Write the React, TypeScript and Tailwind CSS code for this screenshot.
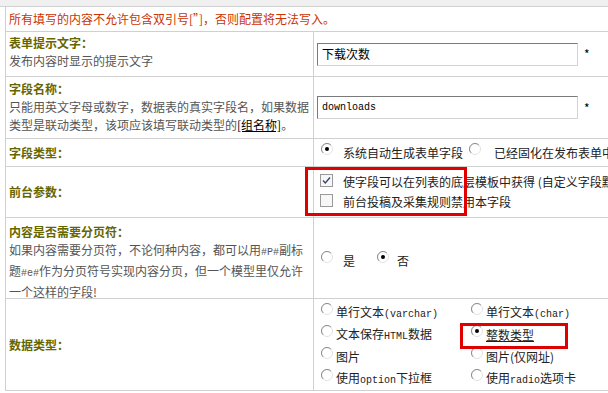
import React from 'react';

const M = ({ children }: { children: React.ReactNode }) => (
  <span className="font-['Liberation_Mono',monospace] text-[10px]">{children}</span>
);

function Radio({ checked = false }: { checked?: boolean }) {
  return (
    <svg width="12" height="12" viewBox="0 0 12 12" className="shrink-0 mb-[8px]">
      <circle cx="6" cy="6" r="5.5" fill="#fff" stroke="#e2e2e2" />
      <path d="M2.1 9.9 A5.5 5.5 0 0 1 9.9 2.1" fill="none" stroke="#8c8c8c" />
      {checked && <circle cx="6" cy="6" r="2" fill="#000" />}
    </svg>
  );
}

function Checkbox({ checked = false }: { checked?: boolean }) {
  return (
    <svg width="13" height="13" viewBox="0 0 13 13" className="shrink-0 mb-[3px]">
      <rect x="0.5" y="0.5" width="12" height="12" fill="#f7f7f7" stroke="#9a9a9a" />
      {checked && <path d="M3 6.5 L5.3 9 L10 3.5" fill="none" stroke="#3a4a6a" strokeWidth="1.4" />}
    </svg>
  );
}

const labelCls = 'font-bold text-[#666600]';
const descCls = 'text-[#555]';

function Row({ h, left, right, center = false }: { h: string; left: React.ReactNode; right: React.ReactNode; center?: boolean }) {
  return (
    <div className={`flex border-b border-[#d0d0d0] ${h}`}>
      <div className={`w-[308px] shrink-0 whitespace-nowrap border-r border-[#d0d0d0] pl-[3px] ${center ? 'flex items-center' : 'pt-[2px]'}`}>
        <div>{left}</div>
      </div>
      <div className="flex flex-1 items-center whitespace-nowrap text-[#222]">{right}</div>
    </div>
  );
}

function TextBox({ children }: { children: React.ReactNode }) {
  return (
    <div className="ml-[3px] flex items-center">
      <div className="flex h-[23px] w-[261px] items-center border border-t-[#7a7a7a] border-l-[#7a7a7a] border-r-[#d4d4d4] border-b-[#d4d4d4] bg-white pl-[4px] text-black">
        {children}
      </div>
      <span className="ml-[6px] text-black">*</span>
    </div>
  );
}

const dataTypes: [React.ReactNode, boolean][] = [
  [<>单行文本<M>(varchar)</M></>, false],
  [<>单行文本<M>(char)</M></>, false],
  [<>文本保存<M>HTML</M>数据</>, false],
  [<span className="underline">整数类型</span>, true],
  [<>图片</>, false],
  [<>图片(仅网址)</>, false],
  [<>使用<M>option</M>下拉框</>, false],
  [<>使用<M>radio</M>选项卡</>, false],
];

export default function App() {
  return (
    <div className="relative h-[393px] w-[608px] overflow-hidden bg-white font-['Noto_Sans_CJK_SC',sans-serif] text-[12px] leading-[18px]">
      <div className="h-[7px] border-b border-[#d0d0d0] bg-[#f0f0f0]" />
      <div className="ml-[5px] w-[760px] border-l border-[#d0d0d0]">
        <div className="flex h-[25px] items-center border-b border-[#d0d0d0] pl-[3px] text-[#cc3300]">
          所有填写的内容不允许包含双引号[”]，否则配置将无法写入。
        </div>

        <Row
          h="h-[45px]"
          left={<>
            <div className={labelCls}>表单提示文字：</div>
            <div className={descCls}>发布内容时显示的提示文字</div>
          </>}
          right={<TextBox>下载次数</TextBox>}
        />

        <Row
          h="h-[62px]"
          left={<div className="pt-[1px]">
            <div className={labelCls}>字段名称：</div>
            <div className={descCls}>只能用英文字母或数字，数据表的真实字段名，如果数据</div>
            <div className={descCls}>类型是联动类型，该项应该填写联动类型的<span className="text-black underline">[组名称]</span>。</div>
          </div>}
          right={<TextBox><M>downloads</M></TextBox>}
        />

        <Row
          h="h-[28px]"
          center
          left={<div className={labelCls}>字段类型：</div>}
          right={<div className="flex items-center pl-[7px]">
            <Radio checked />
            <span className="ml-[10px]">系统自动生成表单字段</span>
            <span className="ml-[6px]"><Radio /></span>
            <span className="ml-[13px]">已经固化在发布表单中</span>
          </div>}
        />

        <Row
          h="h-[51px]"
          center
          left={<div className={labelCls}>前台参数：</div>}
          right={<div className="flex flex-col pl-[6px]">
            <div className="flex h-[20px] items-center">
              <Checkbox checked />
              <span className="ml-[10px]">使字段可以在列表的底层模板中获得 (自定义字段默认不可获得)</span>
            </div>
            <div className="flex h-[20px] items-center">
              <Checkbox />
              <span className="ml-[10px]">前台投稿及采集规则禁用本字段</span>
            </div>
          </div>}
        />

        <Row
          h="h-[81px]"
          left={<div className="pt-[3px]">
            <div className={labelCls}>内容是否需要分页符：</div>
            <div className={descCls}>如果内容需要分页符，不论何种内容，都可以用<M>#P#</M>副标</div>
            <div className={descCls}>题<M>#e#</M>作为分页符号实现内容分页，但一个模型里仅允许</div>
            <div className={descCls}>一个这样的字段!</div>
          </div>}
          right={<div className="flex items-center pl-[7px] pt-[6px]">
            <Radio />
            <span className="ml-[10px]">是</span>
            <span className="ml-[22px]"><Radio checked /></span>
            <span className="ml-[8px]">否</span>
          </div>}
        />

        <Row
          h="h-[92px]"
          center
          left={<div className={labelCls}>数据类型：</div>}
          right={<div className="grid grid-cols-[150px_150px] pl-[7px] pt-[3px]">
            {dataTypes.map(([label, checked], i) => (
              <div key={i} className="flex h-[22px] items-center">
                <Radio checked={checked} />
                <span className="ml-[3px]">{label}</span>
              </div>
            ))}
          </div>}
        />
      </div>

      <div className="absolute left-[305px] top-[167px] h-[49px] w-[162px] border-[3px] border-[#e00000]" />
      <div className="absolute left-[460px] top-[323px] h-[26px] w-[108px] border-[3px] border-[#e00000]" />
    </div>
  );
}
